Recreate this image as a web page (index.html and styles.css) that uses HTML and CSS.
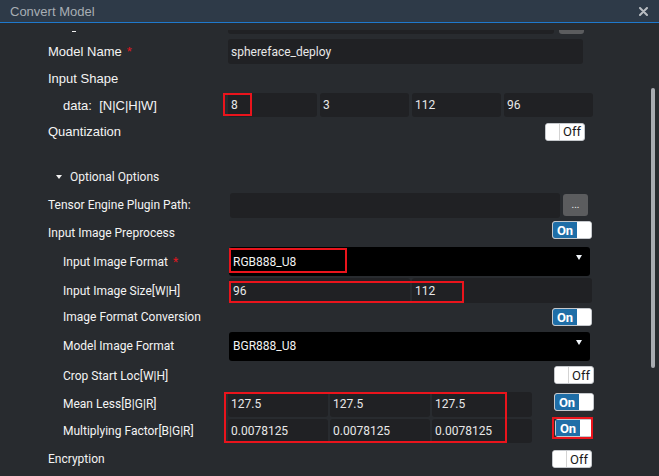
FILE: index.html
```html
<!DOCTYPE html>
<html>
<head>
<meta charset="utf-8">
<title>Convert Model</title>
<link rel="stylesheet" href="styles.css">
</head>
<body>
<div class="titlebar">
  <span class="title">Convert Model</span>
  <svg class="close" width="9" height="9" viewBox="0 0 9 9"><path d="M1 1 L8 8 M8 1 L1 8" stroke="#b9bdc2" stroke-width="2" stroke-linecap="round"/></svg>
</div>
<div class="topgap"></div>
<div class="viewport">
  <div class="content">
    <div class="row r-partial">
      <div class="label"><span class="frag"></span></div>
      <div class="ctrl">
        <div class="input w-partial"></div>
        <div class="btn-more partial"></div>
      </div>
    </div>
    <div class="row h27">
      <div class="label big">Model Name<span class="star">*</span></div>
      <div class="ctrl"><div class="input w-name">sphereface_deploy</div></div>
    </div>
    <div class="row h27">
      <div class="label big">Input Shape</div>
    </div>
    <div class="row h26">
      <div class="label big ind">data:&nbsp; [N|C|H|W]</div>
      <div class="ctrl gap3">
        <div class="input short w89 rel">8<span class="mark m-shape"></span></div>
        <div class="input short w89">3</div>
        <div class="input short w89">112</div>
        <div class="input short w89">96</div>
      </div>
    </div>
    <div class="row h27">
      <div class="label big">Quantization</div>
      <div class="ctrl"><div class="toggle off at545"><span class="knob"></span><span class="txt">Off</span></div></div>
    </div>
    <div class="row opt">
      <span class="tri"></span><span>Optional Options</span>
    </div>
    <div class="row h28">
      <div class="label">Tensor Engine Plugin Path:</div>
      <div class="ctrl sh2">
        <div class="input w-path"></div>
        <div class="btn-more">...</div>
      </div>
    </div>
    <div class="row h27">
      <div class="label">Input Image Preprocess</div>
      <div class="ctrl"><div class="toggle on at552 up5"><span class="txt">On</span><span class="knob"></span></div></div>
    </div>
    <div class="row h31">
      <div class="label ind">Input Image Format<span class="star">*</span></div>
      <div class="ctrl sh1">
        <div class="select rel"><span>RGB888_U8</span><span class="caret"></span><span class="mark m-format"></span></div>
      </div>
    </div>
    <div class="row h27">
      <div class="label ind">Input Image Size[W|H]</div>
      <div class="ctrl sh1 gap2 rel">
        <div class="input w181 pad4">96</div>
        <div class="input w180">112</div>
        <span class="mark m-size"></span>
      </div>
    </div>
    <div class="row h26">
      <div class="label ind">Image Format Conversion</div>
      <div class="ctrl"><div class="toggle on at552"><span class="txt">On</span><span class="knob"></span></div></div>
    </div>
    <div class="row h32">
      <div class="label ind">Model Image Format</div>
      <div class="ctrl sh1">
        <div class="select"><span>BGR888_U8</span><span class="caret"></span></div>
      </div>
    </div>
    <div class="row h28">
      <div class="label ind">Crop Start Loc[W|H]</div>
      <div class="ctrl"><div class="toggle off at554 up2"><span class="knob"></span><span class="txt">Off</span></div></div>
    </div>
    <div class="row h28">
      <div class="label ind">Mean Less[B|G|R]</div>
      <div class="ctrl">
        <div class="group rel">
          <div class="input w100">127.5</div>
          <div class="input w100">127.5</div>
          <div class="input w100">127.5</div>
          <span class="mark m-mean"></span>
        </div>
        <div class="toggle on after-in up4"><span class="txt">On</span><span class="knob"></span></div>
      </div>
    </div>
    <div class="row h26">
      <div class="label ind">Multiplying Factor[B|G|R]</div>
      <div class="ctrl">
        <div class="group">
          <div class="input short w100">0.0078125</div>
          <div class="input short w100">0.0078125</div>
          <div class="input short w100">0.0078125</div>
        </div>
        <div class="toggle on after-in2 up6 rel"><span class="txt">On</span><span class="knob"></span><span class="mark m-tog"></span></div>
      </div>
    </div>
    <div class="row h30">
      <div class="label">Encryption</div>
      <div class="ctrl"><div class="toggle off at552"><span class="knob"></span><span class="txt">Off</span></div></div>
    </div>
  </div>
  <div class="scrollbar"><div class="thumb"></div></div>
</div>
</body>
</html>
```

FILE: styles.css
```css
body {
  margin: 0;
  width: 659px;
  height: 476px;
  overflow: hidden;
  background: #282b2f;
  font-family: "Roboto", "Liberation Sans", sans-serif;
  color: #f2f2f2;
}

.titlebar {
  height: 22px;
  background: #2e3a48;
  border-bottom: 1px solid #1f79cc;
  display: flex;
  align-items: center;
  justify-content: space-between;
  padding: 0 11px 0 10px;
}

.title {
  font: 13px "Liberation Sans", sans-serif;
  color: #a8aeb4;
}

.topgap {
  height: 7px;
}

.viewport {
  display: flex;
  height: 446px;
  overflow: hidden;
}

.content {
  width: 651px;
  flex: none;
  margin-top: -21px;
}

.scrollbar {
  width: 4px;
  padding-top: 58px;
}

.thumb {
  height: 280px;
  background: #a9acb1;
  border-radius: 2px;
}

.row {
  display: flex;
  align-items: center;
  padding-left: 48px;
}

.h26 { height: 26px; }
.h27 { height: 27px; }
.h28 { height: 28px; }
.h30 { height: 30px; }
.h31 { height: 31px; }
.h32 { height: 32px; }

.r-partial {
  height: 29px;
  align-items: flex-start;
}

.frag {
  display: block;
  width: 4px;
  height: 1px;
  margin: 22px 0 0 24px;
  background: #f0f0f0;
}

.label {
  width: 180px;
  flex: none;
  box-sizing: border-box;
  font: 12px "Roboto", sans-serif;
  color: #f4f4f4;
  white-space: nowrap;
}

.label.big {
  font: 13px "Liberation Sans", sans-serif;
}

.label.ind {
  padding-left: 15px;
}

.star {
  color: #e3171f;
  margin-left: 5px;
}

.ctrl {
  display: flex;
  align-items: center;
}

.sh1 { margin-left: 1px; }
.sh2 { margin-left: 2px; }
.gap2 { gap: 2px; }
.gap3 { gap: 3px; }

.group {
  display: flex;
  gap: 2px;
}

.rel { position: relative; }

.input {
  height: 25px;
  box-sizing: border-box;
  background: #202124;
  border-radius: 3px;
  padding-left: 3px;
  display: flex;
  align-items: center;
  font: 12px "Roboto", sans-serif;
  color: #e8e8e8;
}

.input.short { height: 24px; }
.pad4 { padding-left: 4px; }

.w-partial { width: 326px; }
.w-name { width: 355px; }
.w-path { width: 330px; }
.w89 { width: 89px; }
.w100 { width: 100px; }
.w180 { width: 180px; }
.w181 { width: 181px; }

.btn-more {
  width: 25px;
  height: 22px;
  margin-left: 3px;
  background: #5b5c5e;
  border-radius: 3px;
  color: #f0f0f0;
  font: 10px "Roboto", sans-serif;
  display: flex;
  align-items: center;
  justify-content: center;
  padding-bottom: 2px;
  box-sizing: border-box;
}

.btn-more.partial {
  margin-left: 5px;
  margin-top: 3px;
}

.select {
  width: 361px;
  height: 29px;
  box-sizing: border-box;
  background: #000;
  border-radius: 3px;
  display: flex;
  align-items: center;
  justify-content: space-between;
  padding: 0 8px 0 4px;
  font: 12px "Roboto", sans-serif;
  color: #f2f2f2;
}

.caret {
  width: 0;
  height: 0;
  border-left: 3.5px solid transparent;
  border-right: 3.5px solid transparent;
  border-top: 5px solid #f2f6fa;
  margin-bottom: 8px;
}

.opt {
  margin-top: 18px;
  height: 28px;
  padding-left: 56px;
  font: 12px "Roboto", sans-serif;
  color: #f2f2f2;
}

.tri {
  width: 0;
  height: 0;
  border-left: 3.5px solid transparent;
  border-right: 3.5px solid transparent;
  border-top: 4px solid #f2f2f2;
  margin-right: 8px;
}

.toggle {
  display: flex;
  width: 40px;
  height: 18px;
  box-sizing: border-box;
  border: 1px solid #c5c8cc;
  border-radius: 3px;
  overflow: hidden;
  background: #fff;
}

.toggle .txt {
  width: 24px;
  display: flex;
  align-items: center;
  justify-content: center;
  font: 13px "Roboto", sans-serif;
}

.toggle .knob {
  flex: 1;
  background: #fff;
}

.toggle.on .txt {
  background: #1f6ea7;
  color: #fff;
  font-weight: bold;
}

.toggle.off .txt {
  border-left: 1px solid #d3d3d3;
  color: #1a1a1a;
}

.at545 { margin-left: 317px; }
.at552 { margin-left: 324px; }
.at554 { margin-left: 326px; }
.after-in { margin-left: 22px; }
.after-in2 { margin-left: 23px; width: 38px; }

.up2 { margin-top: -2px; }
.up4 { margin-top: -4px; }
.up5 { margin-top: -5px; }
.up6 { margin-top: -6px; }

.toggle.rel { overflow: visible; }

.mark {
  position: absolute;
  box-sizing: border-box;
  border: 2px solid #ea141c;
  pointer-events: none;
}

.m-shape { left: -5px; top: 0; width: 29px; height: 23px; }
.m-format { left: 0; top: 1px; width: 118px; height: 25px; }
.m-size { left: 0; top: 3px; width: 235px; height: 22px; }
.m-mean { left: -4px; top: 0; width: 283px; height: 51px; }
.m-tog { left: -4px; top: -3px; width: 41px; height: 22px; }
```
